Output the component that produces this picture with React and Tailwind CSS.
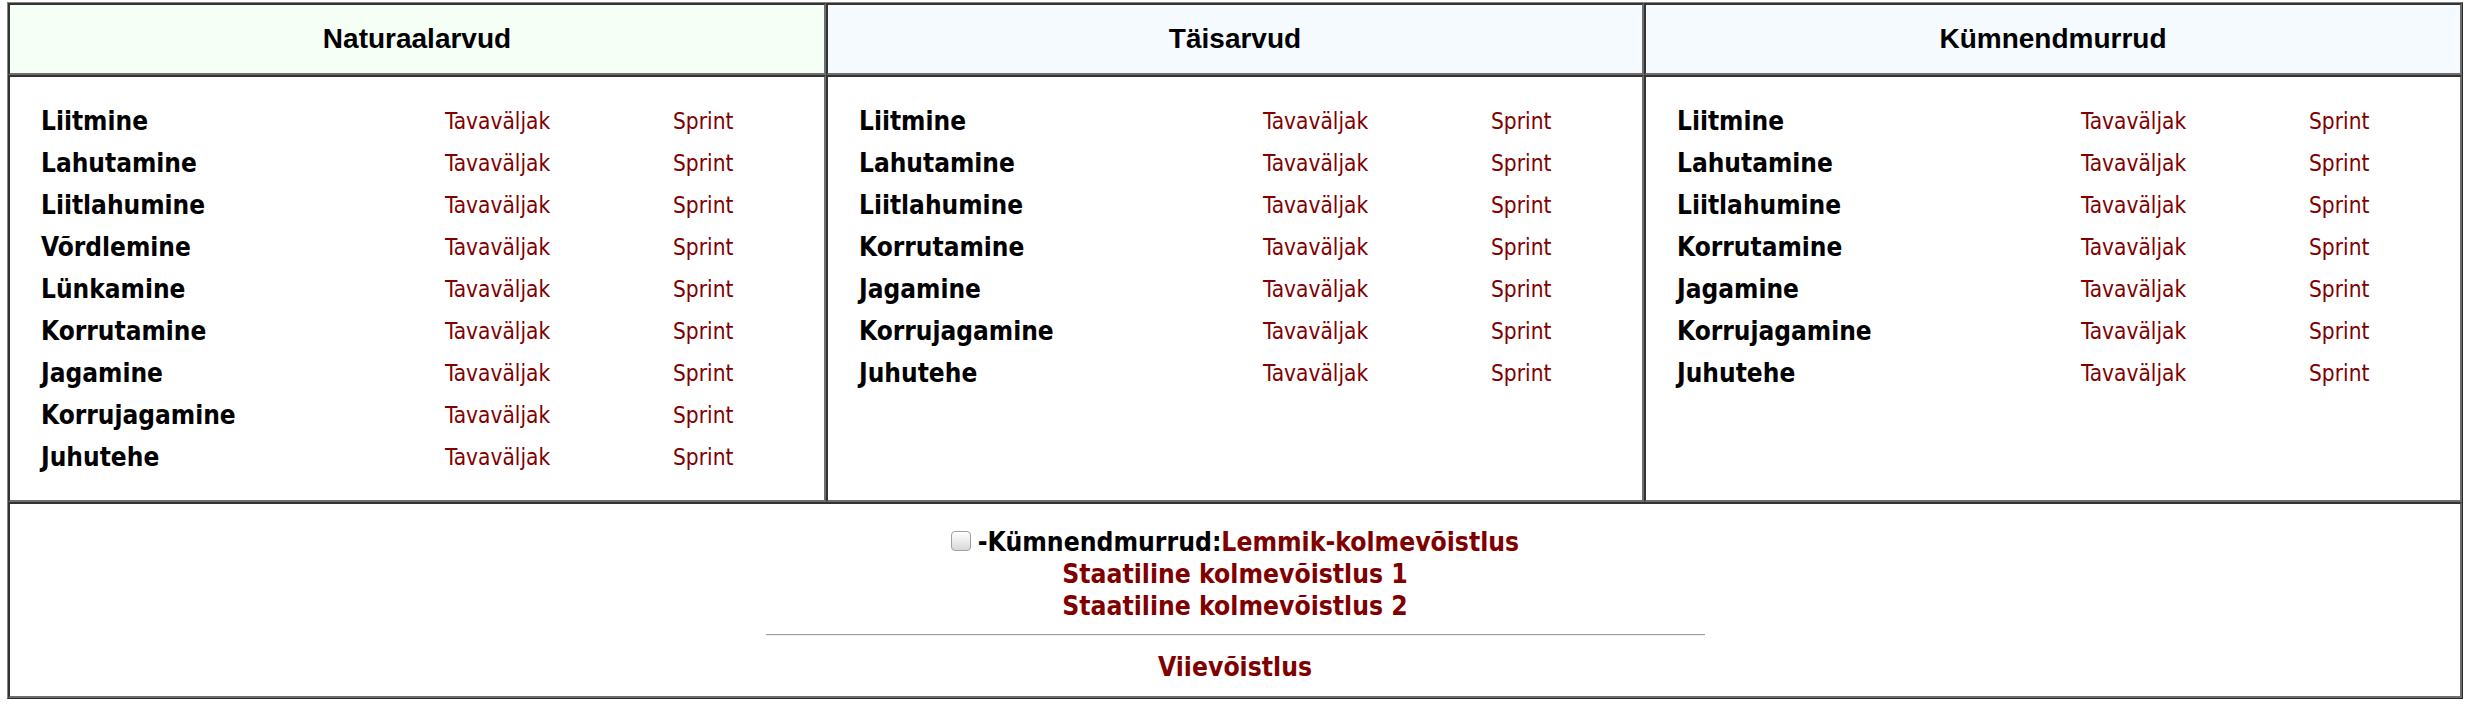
import React from "react";

const natural = ["Liitmine","Lahutamine","Liitlahumine","Võrdlemine","Lünkamine","Korrutamine","Jagamine","Korrujagamine","Juhutehe"];
const integers = ["Liitmine","Lahutamine","Liitlahumine","Korrutamine","Jagamine","Korrujagamine","Juhutehe"];

const cellBorder = "border-2 border-t-[#333333] border-l-[#333333] border-b-[#6e6e6e] border-r-[#6e6e6e]";
const font = { fontFamily: '"DejaVu Sans Condensed","DejaVu Sans",Tahoma,sans-serif' };

function Header({ title, bg }) {
  return (
    <div className={`${cellBorder} ${bg} h-[72px] flex items-center justify-center`}>
      <span className="font-['Liberation_Sans',Arial,sans-serif] font-bold text-[28px] text-black">{title}</span>
    </div>
  );
}

function Body({ items }) {
  return (
    <div className={`${cellBorder} bg-white h-[427px] pt-[23px] pl-[31px]`} style={font}>
      {items.map((it) => (
        <div key={it} className="grid grid-cols-[404px_228px_1fr] h-[42px] items-center font-stretch-condensed">
          <span className="font-bold text-[26px] text-black leading-none">{it}</span>
          <a className="text-[22.5px] text-[#800000] leading-none">Tavaväljak</a>
          <a className="text-[22.5px] text-[#800000] leading-none">Sprint</a>
        </div>
      ))}
    </div>
  );
}

export default function App() {
  return (
    <div className="bg-white w-[2471px] h-[706px] pt-[2px] pl-[7px] pr-[8px]">
      <div className="border border-t-[#858585] border-l-[#858585] border-b-[#2a2a2a] border-r-[#2a2a2a]">
        <div className="grid grid-cols-3">
          <Header title="Naturaalarvud" bg="bg-[#f5fff5]" />
          <Header title="Täisarvud" bg="bg-[#f5faff]" />
          <Header title="Kümnendmurrud" bg="bg-[#f5faff]" />
          <Body items={natural} />
          <Body items={integers} />
          <Body items={integers} />
        </div>
        <div className={`${cellBorder} h-[196px] pt-[22px] flex flex-col items-center font-bold text-[26.25px] leading-[32px] font-stretch-condensed`} style={font}>
          <div className="flex items-center">
            <span className="w-[20px] h-[20px] rounded-[4px] border border-[#a0a0a0] bg-gradient-to-b from-[#ffffff] to-[#d8d8d8] mr-[7px] mb-[2px] inline-block"></span>
            <span className="text-black">-Kümnendmurrud:</span>
            <a className="text-[#800000]">Lemmik-kolmevõistlus</a>
          </div>
          <a className="text-[#800000]">Staatiline kolmevõistlus 1</a>
          <a className="text-[#800000]">Staatiline kolmevõistlus 2</a>
          <div className="w-[939px] mt-[12px] border-t border-t-[#a0a0a0] border-b border-b-[#eeeeee]"></div>
          <a className="text-[#800000] mt-[15px]">Viievõistlus</a>
        </div>
      </div>
    </div>
  );
}
